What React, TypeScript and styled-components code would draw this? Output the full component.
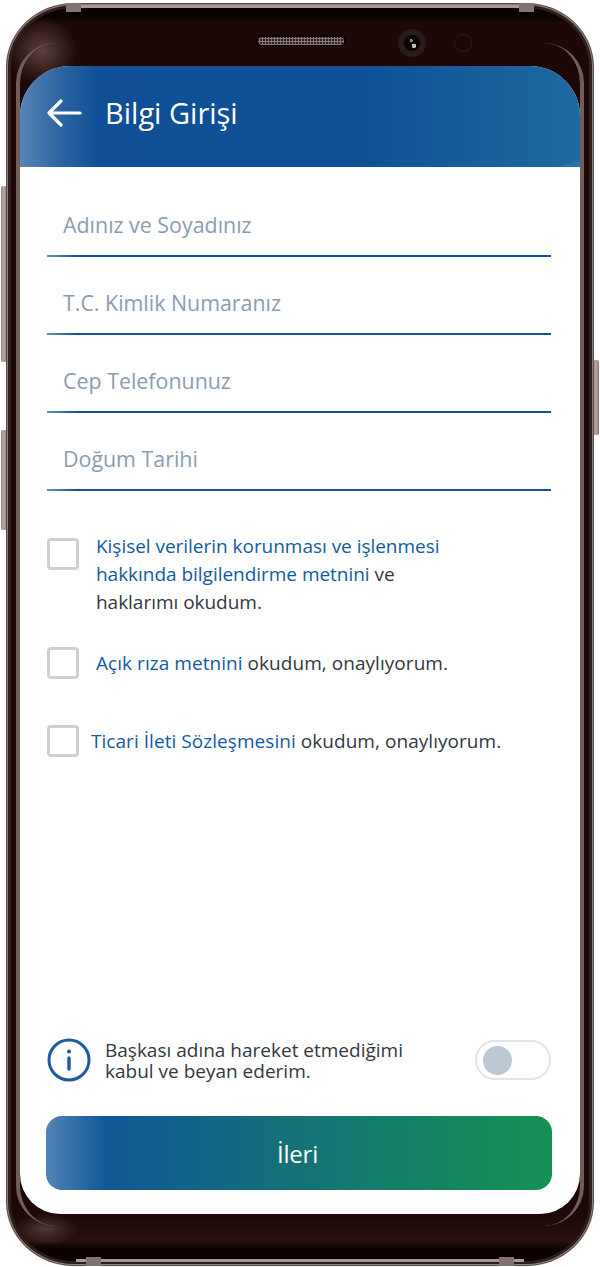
import styled, { createGlobalStyle } from "styled-components";

const GlobalStyle = createGlobalStyle`
  html, body {
    margin: 0;
    padding: 0;
    background: #fff;
    font-family: "Open Sans", "Noto Sans", sans-serif;
  }
`;

const Page = styled.div`
  position: relative;
  width: 600px;
  height: 1267px;
  overflow: hidden;
  background: #fff;
  padding-top: 3px;
  box-sizing: border-box;
`;

const SideKey = styled.div<{ $side: "left" | "right"; $top: number; $height: number }>`
  position: absolute;
  top: ${({ $top }) => $top}px;
  ${({ $side }) => ($side === "left" ? "left: 1px;" : "right: 1px;")}
  width: 6px;
  height: ${({ $height }) => $height}px;
  border-radius: 2px;
  background: linear-gradient(90deg, #9c8885, #b9a8a5 50%, #8a7572);
`;

const Phone = styled.div`
  position: relative;
  width: 588px;
  height: 1263px;
  margin: 0 6px;
  padding: 0 14px;
  box-sizing: border-box;
  border-radius: 68px / 64px;
  display: flex;
  flex-direction: column;
  background:
    radial-gradient(ellipse 36px 34px at 36px 48px, rgba(140, 112, 108, 0.55), transparent),
    radial-gradient(ellipse 32px 16px at 40px 1226px, rgba(125, 98, 94, 0.5), transparent),
    linear-gradient(
      180deg,
      #0b0101 0,
      #0b0101 14px,
      #1d0707 20px,
      #1d0707 1214px,
      #2a100e 1238px,
      #0b0101 1246px,
      #0b0101 100%
    );
  box-shadow:
    inset 0 0 0 1px #5d4b48,
    inset 0 0 0 2px #8f7f7b,
    inset 0 0 0 5px #2e1f1d;
`;

const RimRing = styled.div`
  position: absolute;
  top: 40px;
  bottom: 40px;
  left: 10px;
  right: 10px;
  box-sizing: border-box;
  border-radius: 40px;
  border-style: solid;
  border-width: 0 4px;
  border-color: #6f5e5a;
`;

const EdgeLine = styled.div<{ $edge: "top" | "bottom" }>`
  position: absolute;
  ${({ $edge }) => ($edge === "top" ? "top: 2px;" : "bottom: 4px;")}
  left: 70px;
  right: 70px;
  height: 3px;
  background: #a89a97;
`;

const Antenna = styled.div<{ $edge: "top" | "bottom"; $side: "left" | "right" }>`
  position: absolute;
  ${({ $edge }) => ($edge === "top" ? "top: 0;" : "bottom: 0;")}
  ${({ $side, $edge }) => `${$side}: ${$edge === "top" ? 60 : 80}px;`}
  width: 15px;
  height: 9px;
  background: #827370;
`;

const TopBezel = styled.div`
  height: 63px;
  flex: none;
  display: flex;
  align-items: center;
  padding: 16px 0 0 236px;
  box-sizing: border-box;
`;

const Speaker = styled.div`
  width: 90px;
  height: 12px;
  margin-top: -3px;
  border-radius: 6px;
  box-sizing: border-box;
  border: 2px solid #0a0101;
  background: radial-gradient(circle, #8a7675 0 1px, #2e2020 1.2px) 0 0 / 3px 3px;
`;

const Camera = styled.div`
  width: 28px;
  height: 28px;
  margin-left: 52px;
  border-radius: 50%;
  display: flex;
  align-items: center;
  justify-content: center;
  background: #2a1a1a;
`;

const Lens = styled.div`
  width: 16px;
  height: 16px;
  border-radius: 50%;
  background:
    radial-gradient(circle at 62% 68%, #c4baba 0 2px, transparent 2.5px),
    radial-gradient(circle at 45% 35%, #8f8686 0 1.3px, transparent 1.8px),
    #0a0505;
`;

const Sensor = styled.div`
  width: 18px;
  height: 18px;
  margin-left: 28px;
  border-radius: 50%;
  box-sizing: border-box;
  border: 1px solid #2e1d1d;
  background: #1a0808;
`;

const Screen = styled.div`
  position: relative;
  width: 560px;
  height: 1148px;
  flex: none;
  border-radius: 50px 50px 40px 40px;
  overflow: hidden;
  background: #fff;
  display: flex;
  flex-direction: column;
`;

const Header = styled.header`
  height: 101px;
  flex: none;
  display: flex;
  align-items: center;
  gap: 23px;
  padding: 0 0 8px 27px;
  box-sizing: border-box;
  background:
    linear-gradient(90deg, rgba(255, 255, 255, 0.3), rgba(255, 255, 255, 0.1) 45px, transparent 80px),
    linear-gradient(162deg, transparent 0 262px, rgba(255, 255, 255, 0.07) 263px 100%),
    linear-gradient(160deg, rgba(12, 80, 150, 0) 0 480px, rgba(10, 80, 145, 0.6) 481px 100%),
    linear-gradient(90deg, #104f95, #0f5096 60%, #1e6a9f);
  color: #fff;
`;

const Title = styled.h1`
  margin: 0;
  font-size: 29px;
  font-weight: 400;
  line-height: 32px;
`;

const Form = styled.form`
  flex: 1;
  display: flex;
  flex-direction: column;
  padding: 0 29px 24px 27px;
`;

const Fields = styled.div`
  display: flex;
  flex-direction: column;
  padding-top: 12px;
`;

const Field = styled.div`
  height: 78px;
  box-sizing: border-box;
  padding: 0 0 0 16px;
  display: flex;
  align-items: flex-end;
  position: relative;
`;

const Placeholder = styled.span`
  font-size: 21.4px;
  line-height: 28px;
  margin-bottom: 18px;
  color: #8a9cb2;
`;

const Underline = styled.div`
  position: absolute;
  left: 0;
  right: 0;
  bottom: 0;
  height: 2px;
  background: linear-gradient(90deg, #5c94c4, #10539c 30px);
`;

const Consents = styled.div`
  display: flex;
  flex-direction: column;
  margin-top: 41px;
`;

const Consent = styled.label<{ $gap: number; $mb: number; $center?: boolean; $spacing: number }>`
  display: flex;
  align-items: ${({ $center }) => ($center ? "center" : "flex-start")};
  gap: ${({ $gap }) => $gap}px;
  margin-bottom: ${({ $mb }) => $mb}px;
  font-size: 19px;
  line-height: 28px;
  letter-spacing: ${({ $spacing }) => $spacing}px;
  color: #33383e;
`;

const Box = styled.span<{ $offset?: number }>`
  width: 32px;
  height: 32px;
  flex: none;
  margin-top: ${({ $offset }) => $offset ?? 0}px;
  box-sizing: border-box;
  border: 3px solid #cfcfcf;
  border-radius: 4px;
  background: #fff;
`;

const ConsentText = styled.span<{ $width?: number }>`
  ${({ $width }) => ($width ? `width: ${$width}px;` : "")}
`;

const Link = styled.span`
  color: #135a9f;
`;

const Spacer = styled.div`
  flex: 1;
`;

const Declaration = styled.div`
  display: flex;
  align-items: center;
  margin-bottom: 34px;
`;

const InfoIcon = styled.svg`
  flex: none;
  width: 44px;
  height: 44px;
  margin-top: -2px;
`;

const DeclarationText = styled.p`
  flex: 1;
  margin: 0 0 0 14px;
  font-size: 19px;
  line-height: 21px;
  color: #33383e;
`;

const Toggle = styled.div`
  width: 76px;
  height: 40px;
  flex: none;
  margin-top: -2px;
  box-sizing: border-box;
  border: 2px solid #dfe5ec;
  border-radius: 20px;
  padding: 4px 6px;
  background: #fff;
`;

const Knob = styled.div`
  width: 29px;
  height: 29px;
  border-radius: 50%;
  background: #bdc8d4;
`;

const NextButton = styled.button`
  width: 506px;
  height: 74px;
  margin-left: -1px;
  padding: 0 3px 0 0;
  border: none;
  border-radius: 16px;
  font-family: inherit;
  font-size: 24px;
  color: #fff;
  letter-spacing: -0.2px;
  background:
    linear-gradient(90deg, rgba(255, 255, 255, 0.28), rgba(255, 255, 255, 0) 60px),
    linear-gradient(90deg, #10559a 0, #10569a 8%, #146f7a 45%, #148c5a 90%, #149255 100%);
`;

const App = () => (
  <Page>
    <GlobalStyle />
    <SideKey $side="left" $top={186} $height={176} />
    <SideKey $side="left" $top={430} $height={100} />
    <SideKey $side="right" $top={360} $height={75} />
    <Phone>
      <RimRing />
      <EdgeLine $edge="top" />
      <EdgeLine $edge="bottom" />
      <Antenna $edge="top" $side="left" />
      <Antenna $edge="top" $side="right" />
      <Antenna $edge="bottom" $side="left" />
      <Antenna $edge="bottom" $side="right" />
      <TopBezel>
        <Speaker />
        <Camera>
          <Lens />
        </Camera>
        <Sensor />
      </TopBezel>
      <Screen>
        <Header>
          <svg width="35" height="28" viewBox="0 0 35 28" fill="none" stroke="#fff" strokeWidth="3.2" strokeLinecap="round" strokeLinejoin="round">
            <path d="M33 14H2M14 2 2 14l12 12" />
          </svg>
          <Title>Bilgi Girişi</Title>
        </Header>
        <Form>
          <Fields>
            {["Adınız ve Soyadınız", "T.C. Kimlik Numaranız", "Cep Telefonunuz", "Doğum Tarihi"].map((label) => (
              <Field key={label}>
                <Placeholder>{label}</Placeholder>
                <Underline />
              </Field>
            ))}
          </Fields>
          <Consents>
            <Consent $gap={17} $mb={31} $spacing={-0.03}>
              <Box $offset={6} />
              <ConsentText $width={350}>
                <Link>Kişisel verilerin korunması ve işlenmesi hakkında bilgilendirme metnini</Link> ve haklarımı okudum.
              </ConsentText>
            </Consent>
            <Consent $gap={17} $mb={46} $center $spacing={0.05}>
              <Box />
              <ConsentText>
                <Link>Açık rıza metnini</Link> okudum, onaylıyorum.
              </ConsentText>
            </Consent>
            <Consent $gap={12} $mb={0} $center $spacing={0.05}>
              <Box />
              <ConsentText>
                <Link>Ticari İleti Sözleşmesini</Link> okudum, onaylıyorum.
              </ConsentText>
            </Consent>
          </Consents>
          <Spacer />
          <Declaration>
            <InfoIcon viewBox="0 0 44 44" fill="none">
              <circle cx="22" cy="22" r="20" stroke="#1d5aa0" strokeWidth="3" />
              <circle cx="22" cy="13.5" r="2" fill="#1d5aa0" />
              <path d="M22 20v11" stroke="#1d5aa0" strokeWidth="3.4" strokeLinecap="round" />
            </InfoIcon>
            <DeclarationText>
              Başkası adına hareket etmediğimi
              <br />
              kabul ve beyan ederim.
            </DeclarationText>
            <Toggle>
              <Knob />
            </Toggle>
          </Declaration>
          <NextButton type="button">İleri</NextButton>
        </Form>
      </Screen>
    </Phone>
  </Page>
);

export default App;
